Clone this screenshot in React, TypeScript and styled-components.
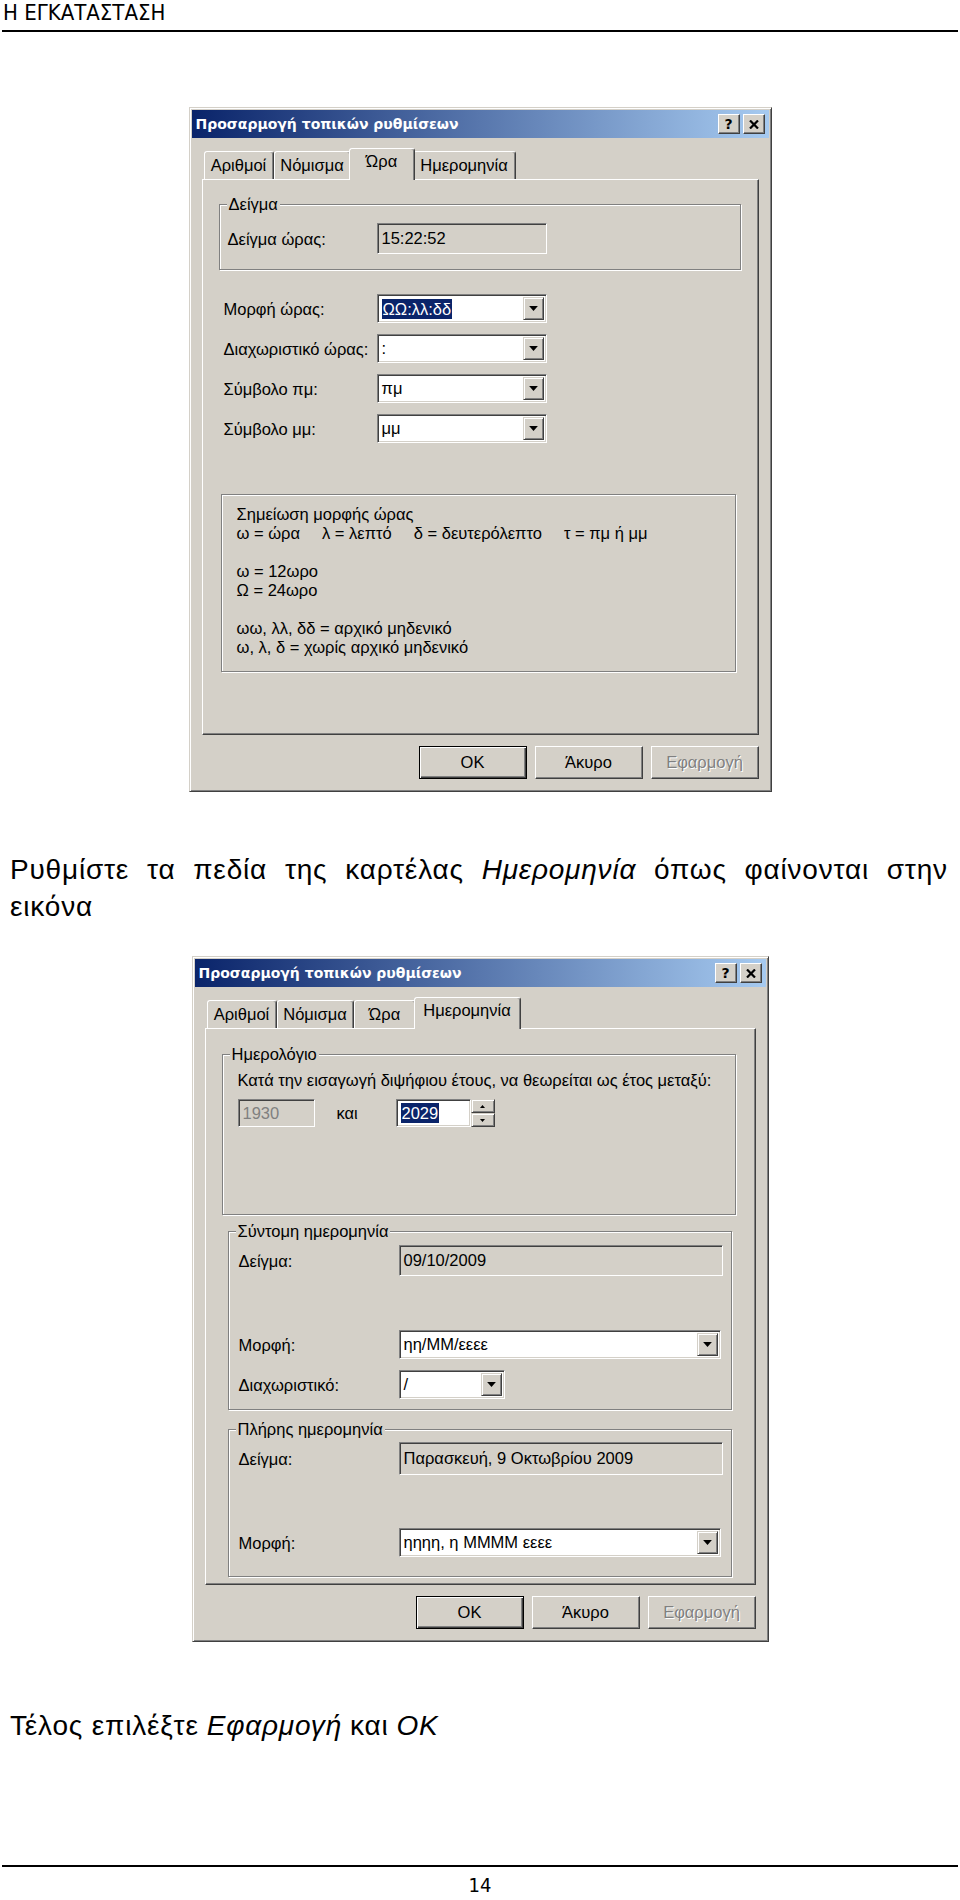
import React from 'react';
import styled, { createGlobalStyle } from 'styled-components';

const FACE = '#d4d0c8';
const SHADOW = '#808080';
const DARK = '#404040';
const LIGHT = '#ffffff';
const NAVY = '#0a246a';

const GlobalStyle = createGlobalStyle`
  html, body {
    margin: 0;
    padding: 0;
    background: #ffffff;
  }
  body {
    font-family: "Liberation Sans", Arial, sans-serif;
    color: #000;
  }
`;

const Page = styled.div`
  width: 960px;
  height: 1900px;
  overflow: hidden;
  display: flex;
  flex-direction: column;
`;

const RunningHead = styled.div`
  font-family: "Liberation Sans Narrow", "DejaVu Sans Condensed", sans-serif;
  font-size: 22px;
  line-height: 26px;
  height: 30px;
  padding: 0 3px;
`;

const Rule = styled.div<{ $mt?: number }>`
  height: 2px;
  margin: ${({ $mt }) => $mt ?? 0}px 2px 0 2px;
  background: #000;
`;

const Dialog = styled.div<{ $width: number; $mt: number }>`
  width: ${({ $width }) => $width}px;
  box-sizing: border-box;
  margin: ${({ $mt }) => $mt}px auto 0 auto;
  padding: 2px;
  background: ${FACE};
  border: 1px solid;
  border-color: ${FACE} ${DARK} ${DARK} ${FACE};
  box-shadow: inset 1px 1px ${LIGHT}, inset -1px -1px ${SHADOW};
  font-family: "Liberation Sans", Arial, sans-serif;
  font-size: 16.5px;
`;

const TitleBar = styled.div`
  height: 28px;
  display: flex;
  align-items: center;
  justify-content: space-between;
  padding: 0 4px 0 4px;
  background: linear-gradient(to right, ${NAVY}, #a6caf0);
`;

const TitleText = styled.span`
  font-family: "DejaVu Sans", Verdana, sans-serif;
  font-weight: bold;
  font-size: 14px;
  color: #fff;
`;

const CaptionButtons = styled.div`
  display: flex;
  gap: 3px;
`;

const CaptionButton = styled.div`
  width: 22px;
  height: 20px;
  box-sizing: border-box;
  background: ${FACE};
  border: 1px solid;
  border-color: ${LIGHT} ${DARK} ${DARK} ${LIGHT};
  box-shadow: inset -1px -1px ${SHADOW};
  display: flex;
  align-items: center;
  justify-content: center;
  font-family: "DejaVu Sans", Verdana, sans-serif;
  font-weight: bold;
  font-size: 14px;
  line-height: 1;
`;

const DialogBody = styled.div`
  padding: 11px 10px 10px 10px;
`;

const TabStrip = styled.div`
  display: flex;
  align-items: flex-end;
  height: 31px;
  padding-left: 2px;
  position: relative;
  z-index: 1;
  margin-bottom: -1px;
`;

const Tab = styled.div<{ $active?: boolean; $width: number }>`
  box-sizing: border-box;
  width: ${({ $width, $active }) => $width + ($active ? 4 : 0)}px;
  height: ${({ $active }) => ($active ? 32 : 28)}px;
  margin: 0 ${({ $active }) => ($active ? -2 : 0)}px ${({ $active }) => ($active ? 0 : 1)}px;
  background: ${FACE};
  border: 1px solid;
  border-bottom: none;
  border-color: ${LIGHT} ${DARK} transparent ${LIGHT};
  border-radius: 3px 3px 0 0;
  box-shadow: inset -1px 0 ${SHADOW};
  display: flex;
  align-items: ${({ $active }) => ($active ? 'flex-start' : 'center')};
  justify-content: center;
  padding-top: ${({ $active }) => ($active ? 3 : 0)}px;
  position: relative;
  z-index: ${({ $active }) => ($active ? 2 : 1)};
`;

const TabPanel = styled.div<{ $height: number }>`
  height: ${({ $height }) => $height}px;
  box-sizing: border-box;
  background: ${FACE};
  border: 1px solid;
  border-color: ${LIGHT} ${DARK} ${DARK} ${LIGHT};
  box-shadow: inset -1px -1px ${SHADOW};
  display: flex;
  flex-direction: column;
`;

const GroupBox = styled.div<{ $mt: number; $ml: number; $mr: number; $pt: number; $pl: number; $pb: number }>`
  position: relative;
  margin: ${({ $mt, $ml, $mr }) => `${$mt}px ${$mr}px 0 ${$ml}px`};
  padding: ${({ $pt, $pl, $pb }) => `${$pt}px 8px ${$pb}px ${$pl}px`};
  border: 1px solid ${SHADOW};
  box-shadow: inset 1px 1px ${LIGHT}, 1px 1px ${LIGHT};
  display: flex;
  flex-direction: column;
`;

const GroupTitle = styled.span`
  position: absolute;
  top: -10px;
  left: 7px;
  padding: 0 2px;
  background: ${FACE};
  line-height: 18px;
`;

const FormRow = styled.div<{ $mt?: number; $label: number; $pl?: number }>`
  display: grid;
  grid-template-columns: ${({ $label }) => $label}px auto;
  justify-content: start;
  align-items: center;
  margin-top: ${({ $mt }) => $mt ?? 0}px;
  padding-left: ${({ $pl }) => $pl ?? 0}px;
`;

const Label = styled.span`
  line-height: 18px;
  white-space: nowrap;
`;

const TextField = styled.div<{ $width: number; $height?: number; $white?: boolean; $dim?: boolean }>`
  box-sizing: border-box;
  width: ${({ $width }) => $width}px;
  height: ${({ $height }) => $height ?? 31}px;
  background: ${({ $white }) => ($white ? '#fff' : FACE)};
  color: ${({ $dim }) => ($dim ? SHADOW : '#000')};
  border: 1px solid;
  border-color: ${SHADOW} ${LIGHT} ${LIGHT} ${SHADOW};
  box-shadow: inset 1px 1px ${DARK}, inset -1px -1px ${FACE};
  padding: 0 4px;
  display: flex;
  align-items: center;
  white-space: nowrap;
`;

const ComboBox = styled.div<{ $width: number; $height?: number }>`
  box-sizing: border-box;
  width: ${({ $width }) => $width}px;
  height: ${({ $height }) => $height ?? 29}px;
  background: #fff;
  border: 1px solid;
  border-color: ${SHADOW} ${LIGHT} ${LIGHT} ${SHADOW};
  box-shadow: inset 1px 1px ${DARK}, inset -1px -1px ${FACE};
  padding: 2px;
  display: flex;
  align-items: stretch;
`;

const ComboValue = styled.span`
  flex: 1;
  display: flex;
  align-items: center;
  padding-left: 2px;
  overflow: hidden;
  white-space: nowrap;
`;

const DropButton = styled.div`
  width: 21px;
  box-sizing: border-box;
  background: ${FACE};
  border: 1px solid;
  border-color: ${FACE} ${DARK} ${DARK} ${FACE};
  box-shadow: inset 1px 1px ${LIGHT}, inset -1px -1px ${SHADOW};
  display: flex;
  align-items: center;
  justify-content: center;
`;

const Selected = styled.span`
  background: ${NAVY};
  color: #fff;
  line-height: 20px;
  padding: 0 1px;
`;

const NoteBox = styled.div`
  margin: 51px 22px 0 18px;
  height: 178px;
  box-sizing: border-box;
  padding: 10px 15px 0 15px;
  border: 1px solid ${SHADOW};
  box-shadow: inset 1px 1px ${LIGHT}, 1px 1px ${LIGHT};
  line-height: 19px;
`;

const NoteLine = styled.div`
  display: flex;
  gap: 22px;
  height: 19px;
  white-space: nowrap;
`;

const ButtonBar = styled.div`
  display: flex;
  justify-content: flex-end;
  gap: 8px;
  margin-top: 11px;
`;

const PushButton = styled.div<{ $default?: boolean; $disabled?: boolean }>`
  width: 108px;
  height: 33px;
  box-sizing: border-box;
  background: ${FACE};
  border: 1px solid;
  border-color: ${({ $default }) => ($default ? '#000' : `${LIGHT} ${DARK} ${DARK} ${LIGHT}`)};
  box-shadow: ${({ $default }) =>
    $default
      ? `inset 1px 1px ${LIGHT}, inset -1px -1px ${DARK}, inset -2px -2px ${SHADOW}`
      : `inset -1px -1px ${SHADOW}`};
  display: flex;
  align-items: center;
  justify-content: center;
  color: ${({ $disabled }) => ($disabled ? SHADOW : '#000')};
  text-shadow: ${({ $disabled }) => ($disabled ? `1px 1px ${LIGHT}` : 'none')};
`;

const YearRow = styled.div`
  display: flex;
  align-items: center;
  margin-top: 10px;
`;

const AndWord = styled.span`
  margin: 0 0 0 22px;
  width: 59px;
`;

const Spin = styled.div`
  display: flex;
  flex-direction: column;
  height: 28px;
`;

const SpinButton = styled.div`
  width: 24px;
  flex: 1;
  box-sizing: border-box;
  background: ${FACE};
  border: 1px solid;
  border-color: ${FACE} ${DARK} ${DARK} ${FACE};
  box-shadow: inset 1px 1px ${LIGHT}, inset -1px -1px ${SHADOW};
  display: flex;
  align-items: center;
  justify-content: center;
`;

const Para = styled.div<{ $mt: number }>`
  margin: ${({ $mt }) => $mt}px 12px 0 10px;
  font-family: "Liberation Sans", Arial, sans-serif;
  font-size: 28px;
  line-height: 37px;
  letter-spacing: 0.8px;
`;

const ParaLine = styled.div<{ $justify?: boolean }>`
  display: flex;
  justify-content: ${({ $justify }) => ($justify ? 'space-between' : 'flex-start')};
  gap: 8px;
  white-space: nowrap;
`;

const Em = styled.span`
  font-style: italic;
`;

const PageNumber = styled.div`
  margin-top: 7px;
  text-align: center;
  font-family: "Liberation Sans Narrow", "DejaVu Sans Condensed", sans-serif;
  font-size: 20px;
  line-height: 22px;
`;

const DownArrow = ({ w = 9, h = 5 }: { w?: number; h?: number }) => (
  <svg width={w} height={h} viewBox="0 0 7 4">
    <path d="M0 0h7L3.5 4z" fill="#000" />
  </svg>
);

const UpArrow = ({ w = 5, h = 3 }: { w?: number; h?: number }) => (
  <svg width={w} height={h} viewBox="0 0 7 4">
    <path d="M0 4h7L3.5 0z" fill="#000" />
  </svg>
);

const Combo = ({ width, children }: { width: number; children?: React.ReactNode }) => (
  <ComboBox $width={width}>
    <ComboValue>{children}</ComboValue>
    <DropButton>
      <DownArrow />
    </DropButton>
  </ComboBox>
);

const TITLE = 'Προσαρμογή τοπικών ρυθμίσεων';

const TABS: { label: string; w: number }[] = [
  { label: 'Αριθμοί', w: 70 },
  { label: 'Νόμισμα', w: 77 },
  { label: 'Ώρα', w: 62 },
  { label: 'Ημερομηνία', w: 103 },
];

// words of the justified first line; italic ones are the UI names
const INTRO_WORDS: { text: string; em?: boolean }[] = [
  { text: 'Ρυθμίστε' },
  { text: 'τα' },
  { text: 'πεδία' },
  { text: 'της' },
  { text: 'καρτέλας' },
  { text: 'Ημερομηνία', em: true },
  { text: 'όπως' },
  { text: 'φαίνονται' },
  { text: 'στην' },
];

const Window = ({
  width,
  mt,
  activeTab,
  panelHeight,
  children,
}: {
  width: number;
  mt: number;
  activeTab: number;
  panelHeight: number;
  children: React.ReactNode;
}) => (
  <Dialog $width={width} $mt={mt}>
    <TitleBar>
      <TitleText>{TITLE}</TitleText>
      <CaptionButtons>
        <CaptionButton>?</CaptionButton>
        <CaptionButton>
          <svg width="10" height="9" viewBox="0 0 10 9">
            <path d="M1 0.5 L9 8.5 M9 0.5 L1 8.5" stroke="#000" strokeWidth="2.2" />
          </svg>
        </CaptionButton>
      </CaptionButtons>
    </TitleBar>
    <DialogBody>
      <TabStrip>
        {TABS.map((t, i) => (
          <Tab key={t.label} $width={t.w} $active={i === activeTab}>
            {t.label}
          </Tab>
        ))}
      </TabStrip>
      <TabPanel $height={panelHeight}>{children}</TabPanel>
      <ButtonBar>
        <PushButton $default>OK</PushButton>
        <PushButton>Άκυρο</PushButton>
        <PushButton $disabled>Εφαρμογή</PushButton>
      </ButtonBar>
    </DialogBody>
  </Dialog>
);

const TimeTab = () => (
  <>
    <GroupBox $mt={24} $ml={16} $mr={17} $pt={18} $pl={8} $pb={15}>
      <GroupTitle>Δείγμα</GroupTitle>
      <FormRow $label={149}>
        <Label>Δείγμα ώρας:</Label>
        <TextField $width={170}>15:22:52</TextField>
      </FormRow>
    </GroupBox>
    <FormRow $mt={24} $label={153} $pl={21}>
      <Label>Μορφή ώρας:</Label>
      <Combo width={170}>
        <Selected>ΩΩ:λλ:δδ</Selected>
      </Combo>
    </FormRow>
    <FormRow $mt={11} $label={153} $pl={21}>
      <Label>Διαχωριστικό ώρας:</Label>
      <Combo width={170}>:</Combo>
    </FormRow>
    <FormRow $mt={11} $label={153} $pl={21}>
      <Label>Σύμβολο πμ:</Label>
      <Combo width={170}>πμ</Combo>
    </FormRow>
    <FormRow $mt={11} $label={153} $pl={21}>
      <Label>Σύμβολο μμ:</Label>
      <Combo width={170}>μμ</Combo>
    </FormRow>
    <NoteBox>
      <NoteLine>Σημείωση μορφής ώρας</NoteLine>
      <NoteLine>
        <span>ω = ώρα</span>
        <span>λ = λεπτό</span>
        <span>δ = δευτερόλεπτο</span>
        <span>τ = πμ ή μμ</span>
      </NoteLine>
      <NoteLine />
      <NoteLine>ω = 12ωρο</NoteLine>
      <NoteLine>Ω = 24ωρο</NoteLine>
      <NoteLine />
      <NoteLine>ωω, λλ, δδ = αρχικό μηδενικό</NoteLine>
      <NoteLine>ω, λ, δ = χωρίς αρχικό μηδενικό</NoteLine>
    </NoteBox>
  </>
);

const DateTab = () => (
  <>
    <GroupBox $mt={25} $ml={16} $mr={19} $pt={16} $pl={15} $pb={87}>
      <GroupTitle>Ημερολόγιο</GroupTitle>
      <Label>Κατά την εισαγωγή διψήφιου έτους, να θεωρείται ως έτος μεταξύ:</Label>
      <YearRow>
        <TextField $width={77} $height={28} $dim>
          1930
        </TextField>
        <AndWord>και</AndWord>
        <TextField $width={75} $height={28} $white>
          <Selected>2029</Selected>
        </TextField>
        <Spin>
          <SpinButton>
            <UpArrow />
          </SpinButton>
          <SpinButton>
            <DownArrow w={5} h={3} />
          </SpinButton>
        </Spin>
      </YearRow>
    </GroupBox>
    <GroupBox $mt={16} $ml={22} $mr={23} $pt={13} $pl={10} $pb={10}>
      <GroupTitle>Σύντομη ημερομηνία</GroupTitle>
      <FormRow $label={160}>
        <Label>Δείγμα:</Label>
        <TextField $width={324}>09/10/2009</TextField>
      </FormRow>
      <FormRow $mt={54} $label={160}>
        <Label>Μορφή:</Label>
        <Combo width={322}>ηη/ΜΜ/εεεε</Combo>
      </FormRow>
      <FormRow $mt={11} $label={160}>
        <Label>Διαχωριστικό:</Label>
        <Combo width={106}>/</Combo>
      </FormRow>
    </GroupBox>
    <GroupBox $mt={19} $ml={22} $mr={23} $pt={12} $pl={10} $pb={19}>
      <GroupTitle>Πλήρης ημερομηνία</GroupTitle>
      <FormRow $label={160}>
        <Label>Δείγμα:</Label>
        <TextField $width={324} $height={33}>
          Παρασκευή, 9 Οκτωβρίου 2009
        </TextField>
      </FormRow>
      <FormRow $mt={53} $label={160}>
        <Label>Μορφή:</Label>
        <Combo width={322}>ηηηη, η ΜΜΜΜ εεεε</Combo>
      </FormRow>
    </GroupBox>
  </>
);

export default function App() {
  return (
    <>
      <GlobalStyle />
      <Page>
        <RunningHead>Η ΕΓΚΑΤΑΣΤΑΣΗ</RunningHead>
        <Rule />
        <Window width={583} mt={75} activeTab={2} panelHeight={556}>
          <TimeTab />
        </Window>
        <Para $mt={59}>
          <ParaLine $justify>
            {INTRO_WORDS.map((w) => (w.em ? <Em key={w.text}>{w.text}</Em> : <span key={w.text}>{w.text}</span>))}
          </ParaLine>
          <ParaLine>εικόνα</ParaLine>
        </Para>
        <Window width={577} mt={31} activeTab={3} panelHeight={557}>
          <DateTab />
        </Window>
        <Para $mt={65}>
          <ParaLine>
            <span>Τέλος επιλέξτε</span>
            <Em>Εφαρμογή</Em>
            <span>και</span>
            <Em>OK</Em>
          </ParaLine>
        </Para>
        <Rule $mt={121} />
        <PageNumber>14</PageNumber>
      </Page>
    </>
  );
}
